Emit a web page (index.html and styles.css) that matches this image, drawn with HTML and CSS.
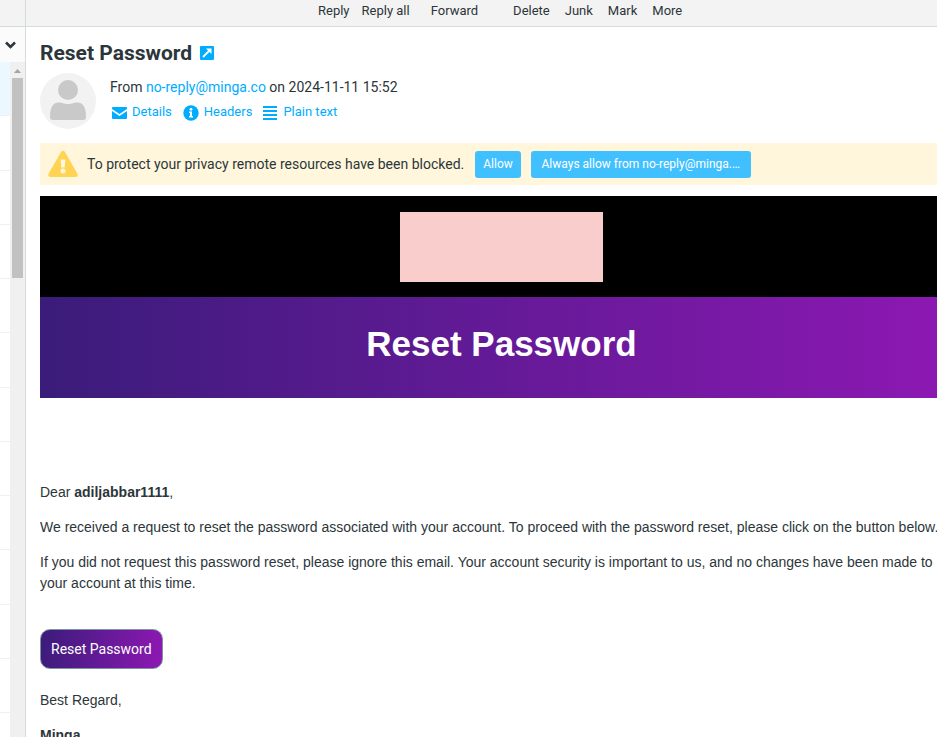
FILE: index.html
```html
<!DOCTYPE html>
<html lang="en">
<head>
<meta charset="utf-8">
<title>Reset Password</title>
<link rel="stylesheet" href="styles.css">
</head>
<body>
<div class="app">
  <aside class="sidebar">
    <div class="sidebar-top"></div>
    <div class="sidebar-head">
      <button class="toggle" type="button" aria-label="Options"><svg width="12" height="8" viewBox="0 0 12 8"><path d="M1 1.500 L5.500 6 L10 1.500" fill="none" stroke="#2c363a" stroke-width="2.600"/></svg></button>
    </div>
    <div class="list-area">
      <div class="list">
        <div class="row selected"></div><div class="row"></div><div class="row"></div><div class="row"></div>
        <div class="row"></div><div class="row"></div><div class="row"></div><div class="row"></div>
        <div class="row"></div><div class="row"></div><div class="row"></div><div class="row"></div>
        <div class="row-last"></div>
      </div>
      <div class="scrollbar">
        <svg width="9" height="16" viewBox="0 0 9 16"><path d="M1 11 L4.500 7 L8 11Z" fill="#a3a3a3"/></svg>
        <div class="thumb"></div>
      </div>
    </div>
  </aside>
  <main class="content">
    <nav class="toolbar">
      <div class="group reply"><a href="#">Reply</a><a href="#">Reply all</a></div>
      <a class="forward" href="#">Forward</a>
      <div class="group manage"><a href="#">Delete</a><a href="#">Junk</a><a href="#">Mark</a><a href="#">More</a></div>
    </nav>
    <div class="message">
      <header class="header">
        <h2>Reset Password
          <a href="#" aria-label="Open in new window"><svg width="14" height="14" viewBox="0 0 14 14"><rect width="14" height="14" rx="1" fill="#00acff"/><path d="M3 11 L9.500 4.500" stroke="#fff" stroke-width="1.800"/><path d="M6 2.500 H11.500 V8Z" fill="#fff"/></svg></a>
        </h2>
        <div class="sender">
          <svg class="avatar" width="56" height="56" viewBox="0 0 56 56"><circle cx="28" cy="28" r="28" fill="#f2f2f2"/><circle cx="28" cy="17" r="10" fill="#c9c9c9"/><path d="M10 44 C10 34 13 29.500 19 29.500 C22 29.500 24 31 28 31 C32 31 34 29.500 37 29.500 C43 29.500 46 34 46 44 Q46 47 43 47 H13 Q10 47 10 44Z" fill="#c9c9c9"/></svg>
          <div>
            <div class="from">From <a href="#">no-reply@minga.co</a> on 2024-11-11 15:52</div>
            <div class="links">
              <a href="#"><svg width="17" height="16" viewBox="-1 0 17 16"><path d="M1 3 Q1 2 2 2 H15 Q16 2 16 3 V4 L8.500 9 L1 4Z" fill="#00acff"/><path d="M1 6 L8.500 11 L16 6 V13 Q16 14 15 14 H2 Q1 14 1 13Z" fill="#00acff"/></svg>Details</a>
              <a href="#"><svg width="16" height="16" viewBox="0 0 16 16"><circle cx="8" cy="8" r="7.700" fill="#00acff"/><circle cx="8" cy="4.300" r="1.400" fill="#fff"/><path d="M6 6.500 H9 V11 H10 V12.500 H6 V11 H7 V8 H6Z" fill="#fff"/></svg>Headers</a>
              <a href="#"><svg width="15" height="16" viewBox="0 0 15 16"><path d="M0 2H14M0 6H14M0 10H14M0 14H14" stroke="#00acff" stroke-width="2"/></svg>Plain text</a>
            </div>
          </div>
        </div>
      </header>
      <div class="notice">
        <svg width="30" height="28" viewBox="0 0 30 28"><path d="M13 2 Q15 -0.500 17 2 L29.300 23.500 Q30.500 27 27.500 27 H2.500 Q-0.500 27 0.700 23.500Z" fill="#ffd452"/><path d="M12.700 9.500H17.300L16.700 17.500H13.300Z" fill="#fff6dc"/><circle cx="15" cy="21" r="2.500" fill="#fff6dc"/></svg>
        <span>To protect your privacy remote resources have been blocked.</span>
        <button type="button">Allow</button>
        <button class="always" type="button">Always allow from no-reply@minga.…</button>
      </div>
      <article class="mail">
        <div class="logo-band"><div class="logo"></div></div>
        <h1>Reset Password</h1>
        <div class="body">
          <p>Dear <b>adiljabbar1111</b>,</p>
          <p>We received a request to reset the password associated with your account. To proceed with the password reset, please click on the button below.</p>
          <p>If you did not request this password reset, please ignore this email. Your account security is important to us, and no changes have been made to your account at this time.</p>
          <button class="reset" type="button">Reset Password</button>
          <p>Best Regard,</p>
          <p><b>Minga</b></p>
        </div>
      </article>
    </div>
  </main>
</div>
</body>
</html>
```
FILE: styles.css
```css
* { box-sizing: border-box; }
body { margin: 0; overflow: hidden; background: #fff; color: #2c363a; font: 14px/21px Roboto, sans-serif; }
a { color: #00acff; text-decoration: none; }
button { font: inherit; cursor: pointer; }
svg { display: block; flex: none; }

.app { display: flex; height: 100vh; overflow: hidden; }

.sidebar { display: flex; flex-direction: column; flex: none; width: 26px; border-right: 1px solid #d4dbde; }
.sidebar-top { height: 27px; background: #f3f3f3; border-bottom: 1px solid #d4dbde; }
.sidebar-head { height: 35px; background: #fbfbfb; }
.toggle { display: flex; align-items: center; height: 35px; padding: 0 0 0 5px; border: 0; background: none; }
.list-area { display: flex; flex: 1; }
.list { display: flex; flex-direction: column; width: 10px; }
.row { flex: 1; border-bottom: 1px solid #f0f0f0; }
.row.selected { background: #ebf8ff; }
.row-last { height: 24px; }
.scrollbar { flex: 1; padding: 0 2px; background: #f0f0f0; }
.scrollbar svg { margin-left: 1px; }
.thumb { height: 200px; background: #c1c1c1; }

.content { flex: 1; min-width: 0; overflow: hidden; }
.toolbar { display: flex; height: 27px; padding-left: 292px; background: #f3f3f3; border-bottom: 1px solid #d4dbde; font-size: 13px; white-space: nowrap; }
.toolbar a { color: #2c363a; }
.group { display: flex; }
.reply { gap: 12px; }
.forward { margin: 0 35px 0 21px; }
.manage { gap: 15px; }

.message { padding-left: 14px; }
.header { padding: 11px 0 14px; }
h2 { display: flex; align-items: center; gap: 8px; margin: 0 0 5px; font-size: 21px; line-height: 30px; font-weight: 700; }
.sender { display: flex; gap: 14px; }
.from { padding-top: 3px; line-height: 22px; }
.links { display: flex; gap: 11px; margin-top: 3px; font-size: 13px; line-height: 22px; }
.links a { display: flex; gap: 5px; }
.links svg { margin-top: 4px; }

.notice { display: flex; align-items: center; height: 42px; margin-bottom: 11px; padding-left: 8px; background: #fff6dc; white-space: nowrap; }
.notice span { margin: 0 11px 0 9px; }
.notice button { flex: none; height: 27px; margin-right: 10px; padding: 0 8px; border: 0; border-radius: 3px; background: #41c0ff; color: #fff; font-size: 12px; }
.notice .always { width: 220px; }

/* The mail keeps its own width and runs past the pane edge. */
.mail { margin-right: -26px; font: 14px/21px "Liberation Sans", Arial, sans-serif; }
.logo-band { display: flex; justify-content: center; padding: 16px 0 15px; background: #000; }
.logo { width: 203px; height: 70px; background: #facdcd; }
h1 { margin: 0; padding: 22px 0 29px; background: linear-gradient(90deg, #3a1c7a, #8e18b4); color: #fff; font-size: 35px; line-height: 50px; text-align: center; }
.body { padding: 84px 20px 0 0; }
.body p { margin: 0 0 14px; }
.reset { height: 40px; margin: 21px 0; padding: 0 10px; border: 1px solid #7c949f; border-radius: 10px; background: linear-gradient(99deg, #3a1c7a, #8e18b4); color: #fff; font: 14px/22px Roboto, sans-serif; }
```
